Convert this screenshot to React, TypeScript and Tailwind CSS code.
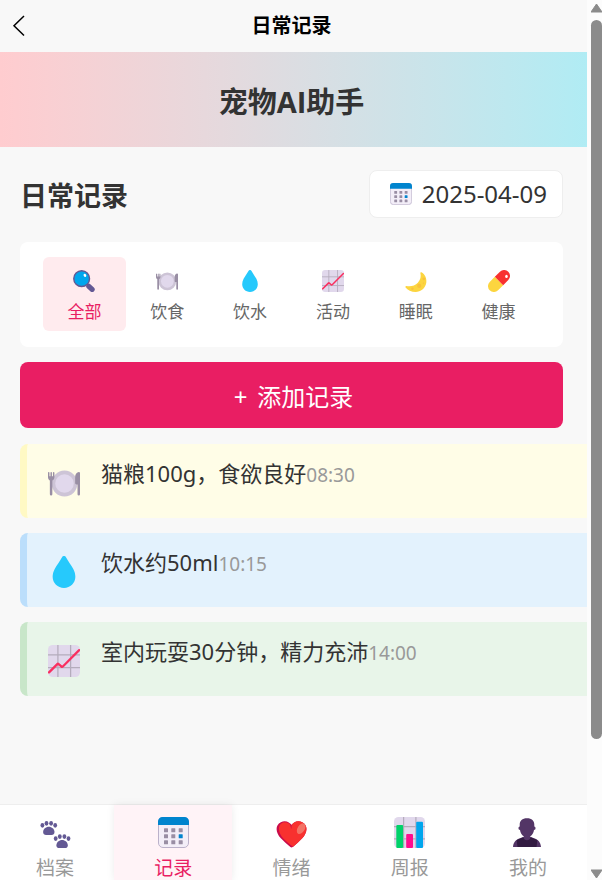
import type { ReactNode } from "react";

type IconProps = { className: string };

function Glyph({ className, children }: { className: string; children: ReactNode }) {
  return (
    <svg viewBox="0 0 31 31" className={`block shrink-0 ${className}`} aria-hidden="true">
      {children}
    </svg>
  );
}

function CalendarIcon({ className }: IconProps) {
  const columns = [6, 13.3, 20.7];
  const rows = [11.3, 17.3, 23.3];
  return (
    <Glyph className={className}>
      <rect x="0.5" y="0.5" width="30" height="30" rx="4.5" fill="#f3eef8" stroke="#bbb1ca" />
      <path d="M0 8V4.5A4.5 4.5 0 0 1 4.5 0h22A4.5 4.5 0 0 1 31 4.5V8Z" fill="#0084ce" />
      {rows.map((y, r) =>
        columns.map((x, c) => (
          <rect key={`${x}-${y}`} x={x} y={y} width="4" height="4" rx="0.5" fill={r === 1 && c === 2 ? "#0084ce" : "#998ea4"} />
        )),
      )}
    </Glyph>
  );
}

function SearchIcon({ className }: IconProps) {
  return (
    <Glyph className={className}>
      <path d="M19 19l3 3" stroke="#635994" strokeWidth="3" />
      <path d="M22.3 23l4.6 4.3" stroke="#635994" strokeWidth="7.4" strokeLinecap="round" />
      <circle cx="12.2" cy="12.2" r="11.1" fill="#00a6ed" stroke="#635994" strokeWidth="2" />
      <ellipse cx="16.8" cy="7.6" rx="1.8" ry="2.3" transform="rotate(-30 16.8 7.6)" fill="#fff" />
    </Glyph>
  );
}

function PlateIcon({ className }: IconProps) {
  return (
    <Glyph className={className}>
      <circle cx="16" cy="16" r="12.5" fill="#cdc4d6" />
      <circle cx="16" cy="16" r="9" fill="#e1d8ec" />
      <path
        d="M0 5.500a.7.7 0 0 1 1.400 0V9h1V5.500a.7.7 0 0 1 1.400 0V9h1V5.500a.7.7 0 0 1 1.400 0V10c0 1.600-.8 2.600-2 3v13.500a1.200 1.200 0 0 1-2.400 0V13C.8 12.600 0 11.600 0 10Z"
        fill="#998ea4"
      />
      <path d="M31 6v20.500a1.200 1.200 0 0 1-2.400 0V17h-1c-.8 0-1.300-.6-1.300-1.400V9.500C26.300 7 28 4.900 29.800 4.900c.7 0 1.200.4 1.200 1.100Z" fill="#998ea4" />
    </Glyph>
  );
}

function DropIcon({ className }: IconProps) {
  return (
    <Glyph className={className}>
      <path
        d="M13.600 1.100c.8-1.500 3-1.500 3.800 0 2.200 3.900 5 7.500 7.100 11.400 1.300 2.400 2 5 2 7.700C26.500 26.400 21.600 31 15.500 31S4.500 26.400 4.500 20.200c0-2.700.7-5.300 2-7.700 2.100-3.900 4.900-7.500 7.100-11.400Z"
        fill="#26c9fc"
      />
    </Glyph>
  );
}

function TrendIcon({ className }: IconProps) {
  return (
    <Glyph className={className}>
      <rect width="31" height="31" rx="4.5" fill="#e1d8ec" />
      <path d="M9.600 0v31M21.900 0v31M0 9.600h31M0 21.900h31" stroke="#b4acbc" strokeWidth="1.200" fill="none" />
      <path d="M1 26.500 9 18.500q.6-.6 1.300 0l2.600 2.300q.8.6 1.500 0L30.200 5" stroke="#f92f60" strokeWidth="2.200" strokeLinecap="round" fill="none" />
    </Glyph>
  );
}

function MoonIcon({ className }: IconProps) {
  return (
    <Glyph className={className}>
      <path
        d="M23.200 3.300C28 6 31 12 30 18c-1.300 8-8 13-15 13C9 31 3.500 28.400.8 24.600c-.7-1 .1-2.200 1.300-2 6 1 12-.2 16-4.600s4.600-9 3.600-13.300c-.2-1.100.5-1.900 1.500-1.400Z"
        fill="#fcd53f"
      />
      <circle cx="20" cy="22.500" r="3" fill="#f9c23c" />
      <circle cx="26.500" cy="12.500" r="2" fill="#f9c23c" />
      <circle cx="10.500" cy="26.500" r="1.700" fill="#f9c23c" />
      <circle cx="26" cy="18.500" r="1" fill="#f9c23c" />
    </Glyph>
  );
}

function PillIcon({ className }: IconProps) {
  return (
    <Glyph className={className}>
      <g transform="rotate(-45 15.500 15.500)">
        <path d="M15.500 7.200H5.300a8.300 8.300 0 0 0 0 16.600h10.200Z" fill="#fcd53f" />
        <path d="M15.500 7.200h10.200a8.300 8.300 0 0 1 0 16.600H15.500Z" fill="#f8312f" />
      </g>
      <ellipse cx="26" cy="9" rx="1.800" ry="2.200" fill="#fff" />
    </Glyph>
  );
}

function PawsIcon({ className }: IconProps) {
  const paw = (
    <>
      <ellipse cx="2.400" cy="8.300" rx="1.900" ry="2.400" />
      <ellipse cx="6.500" cy="6.300" rx="1.900" ry="2.400" />
      <ellipse cx="11.100" cy="6.300" rx="1.900" ry="2.400" />
      <ellipse cx="15.200" cy="8.300" rx="1.900" ry="2.400" />
      <path d="M8.800 9.700c3 0 5.700 2.300 5.700 5.300 0 1.800-1.200 3-3 3H6.100c-1.800 0-3-1.200-3-3 0-3 2.700-5.300 5.700-5.300Z" />
    </>
  );
  return (
    <Glyph className={className}>
      <g fill="#635994">
        {paw}
        <g transform="translate(13.300 13.300)">{paw}</g>
      </g>
    </Glyph>
  );
}

function HeartIcon({ className }: IconProps) {
  return (
    <Glyph className={className}>
      <g transform="translate(-1.600 -1.200) scale(1.070)">
        <path
          d="M6 6c4.665-2.332 8.500.5 10 2.500 1.500-2 5.335-4.832 10-2.500 6 3 4.500 10.500 0 15-2.196 2.196-6.063 6.063-8.891 8.214a1.764 1.764 0 0 1-2.186-.041C12.330 27.080 8.165 23.165 6 21 1.500 16.500 0 9 6 6Z"
          fill="#ca0b4a"
        />
        <path
          d="M7.500 6.400C11.300 5 14.700 7.200 16 9.600v-1.100c1.500-2 5.335-4.832 10-2.500 6 3 4.500 10.500 0 15-2.196 2.196-5.700 5.700-8.500 7.900C14.500 27 10.500 23.500 8.300 21.200 3.800 16.600 2.300 9 7.500 6.400Z"
          fill="#f8312f"
        />
        <path d="M16 8.500c-.3-.4-.8-.9-1.300-1.300.2 2 .6 4 1.300 5.200Z" fill="#ca0b4a" />
        <ellipse cx="25" cy="12" rx="3.300" ry="5.500" transform="rotate(32 25 12)" fill="#f37366" />
      </g>
    </Glyph>
  );
}

function BarsIcon({ className }: IconProps) {
  return (
    <Glyph className={className}>
      <rect width="31" height="31" rx="4.500" fill="#e1d8ec" />
      <path d="M9.600 0v31M21.900 0v31M0 9.600h31M0 21.900h31" stroke="#b4acbc" strokeWidth="1.200" fill="none" />
      <rect x="2.300" y="8" width="6.800" height="23" rx="1" fill="#00d26a" />
      <rect x="12.200" y="17" width="6.800" height="14" rx="1" fill="#ff0d8e" />
      <rect x="22.200" y="4.700" width="6.800" height="26.300" rx="1" fill="#00a6ed" />
    </Glyph>
  );
}

function PersonIcon({ className }: IconProps) {
  return (
    <Glyph className={className}>
      <path d="M1 30c.3-4.500 3-7.500 7-8.700L11 20h8l3 1.300c4 1.200 6.700 4.200 7 8.700Z" fill="#533566" />
      <path d="M5.500 30 4.700 23.200C6 22.300 8 21.500 11 20.500l4 2.500 4-2.500c3 1 5 1.800 6.300 2.700L24.500 30Z" fill="#321b41" />
      <path
        d="M15 1.200c4.800 0 7.300 2.500 7.300 6.300v2c.8.2 1.200.9 1.200 1.700 0 1-.5 1.700-1.500 1.800-.4 2.800-1.800 5-3.700 6.300v1.400c0 1.500-1.500 2.500-3.300 2.500s-3.300-1-3.300-2.500v-1.400C9.800 18 8.400 15.800 8 13c-1-.1-1.500-.8-1.500-1.800 0-.8.4-1.500 1.200-1.700v-2c0-3.800 2.500-6.300 7.300-6.300Z"
        fill="#533566"
      />
    </Glyph>
  );
}

const filters = [
  { label: "全部", Icon: SearchIcon, active: true },
  { label: "饮食", Icon: PlateIcon, active: false },
  { label: "饮水", Icon: DropIcon, active: false },
  { label: "活动", Icon: TrendIcon, active: false },
  { label: "睡眠", Icon: MoonIcon, active: false },
  { label: "健康", Icon: PillIcon, active: false },
];

const records = [
  { text: "猫粮100g，食欲良好", time: "08:30", Icon: PlateIcon, tone: "border-[#fff9c4] bg-[#fffde7]" },
  { text: "饮水约50ml", time: "10:15", Icon: DropIcon, tone: "border-[#bbdefb] bg-[#e3f2fd]" },
  { text: "室内玩耍30分钟，精力充沛", time: "14:00", Icon: TrendIcon, tone: "border-[#c8e6c9] bg-[#e8f5e9]" },
];

const tabs = [
  { label: "档案", Icon: PawsIcon, active: false },
  { label: "记录", Icon: CalendarIcon, active: true },
  { label: "情绪", Icon: HeartIcon, active: false },
  { label: "周报", Icon: BarsIcon, active: false },
  { label: "我的", Icon: PersonIcon, active: false },
];

function ScrollTrack() {
  return (
    <div className="flex w-[15px] shrink-0 flex-col overflow-hidden bg-[#fcfcfc] pl-1" aria-hidden="true">
      <svg viewBox="0 0 12 20" className="block h-5 w-3 shrink-0">
        <path d="M5.500 4 11 12H0Z" fill="#8b8b8b" stroke="#8b8b8b" strokeLinejoin="round" />
      </svg>
      <div className="w-[11px] grow rounded-full bg-[#8b8b8b]" />
      <div className="flex h-[16%] items-end">
        <svg viewBox="0 0 12 12" className="block h-3 w-3 shrink-0">
          <path d="M0 2h11L5.500 10Z" fill="#8b8b8b" stroke="#8b8b8b" strokeLinejoin="round" />
        </svg>
      </div>
    </div>
  );
}

export default function App() {
  return (
    <div className="flex h-screen bg-[#f8f8f8] font-['Noto_Sans','Noto_Sans_CJK_SC',sans-serif] text-[#333333]">
      <div className="flex min-w-0 grow flex-col overflow-hidden">
        <header className="grid h-[52px] shrink-0 grid-cols-[1fr_auto_1fr] items-center pl-3 pr-4 text-black">
          <button type="button" aria-label="返回" className="justify-self-start">
            <svg viewBox="0 0 14 22" className="block h-[22px] w-3.5" aria-hidden="true">
              <path d="M12 1 2 10.700 12 20.500" fill="none" stroke="#000" strokeWidth="1.500" />
            </svg>
          </button>
          <h1 className="text-xl font-bold">日常记录</h1>
        </header>

        <div className="flex h-[95px] shrink-0 items-center justify-center bg-linear-to-r from-[#ffcccf] to-[#b0ecf4] pr-1 pt-1">
          <p className="font-['Open_Sans','Noto_Sans_CJK_SC',sans-serif] text-[29px] font-bold">宠物AI助手</p>
        </div>

        <main className="flex min-h-0 grow flex-col overflow-hidden pl-5 pt-[23px]">
          <div className="flex items-center justify-between pr-6">
            <h2 className="pt-1 text-[27px] font-bold">日常记录</h2>
            <button type="button" className="flex h-12 items-center gap-2.5 rounded-lg border border-[#eeeeee] bg-white pl-5 pr-[15px] text-2xl">
              <CalendarIcon className="size-[22px]" />
              2025-04-09
            </button>
          </div>

          <div className="mr-6 mt-6 grid grid-cols-6 rounded-lg bg-white px-[23px] pb-4 pt-[15px]">
            {filters.map(({ label, Icon, active }) => (
              <button
                key={label}
                type="button"
                aria-pressed={active}
                className={`flex h-[74px] flex-col items-center gap-2 rounded-md pt-[13px] text-[17px] leading-6 ${
                  active ? "bg-[#ffebee] text-[#e91e63]" : "text-[#666666]"
                }`}
              >
                <Icon className="size-[22px]" />
                {label}
              </button>
            ))}
          </div>

          <button type="button" className="mr-6 mt-[15px] flex h-[66px] shrink-0 items-center justify-center gap-2.5 rounded-lg bg-[#e91e63] pl-1 pt-1 text-2xl text-white">
            <span>+</span>
            <span>添加记录</span>
          </button>

          <ul className="mt-4 flex flex-col gap-[15px]">
            {records.map(({ text, time, Icon, tone }) => (
              <li key={time} className={`flex h-[74px] rounded-l-lg border-l-[7px] pl-[21px] pt-[13px] ${tone}`}>
                <Icon className="mt-2.5 size-8" />
                <p className="ml-[21px] text-[22px] leading-8">
                  {text}
                  <time className="text-[19px] text-[#999999]">{time}</time>
                </p>
              </li>
            ))}
          </ul>
        </main>

        <nav className="-ml-1 grid h-[76px] shrink-0 grid-cols-5 border-t border-[#eeeeee] bg-white">
          {tabs.map(({ label, Icon, active }) => (
            <button
              key={label}
              type="button"
              aria-current={active ? "page" : undefined}
              className={`flex flex-col items-center gap-2 pt-3 text-[19px] leading-6 ${
                active ? "bg-[#fff3f7] text-[#e91e63] shadow-[0_0_8px_rgba(0,0,0,0.08)]" : "text-[#999999]"
              }`}
            >
              <Icon className="size-[31px]" />
              {label}
            </button>
          ))}
        </nav>
      </div>
      <ScrollTrack />
    </div>
  );
}
